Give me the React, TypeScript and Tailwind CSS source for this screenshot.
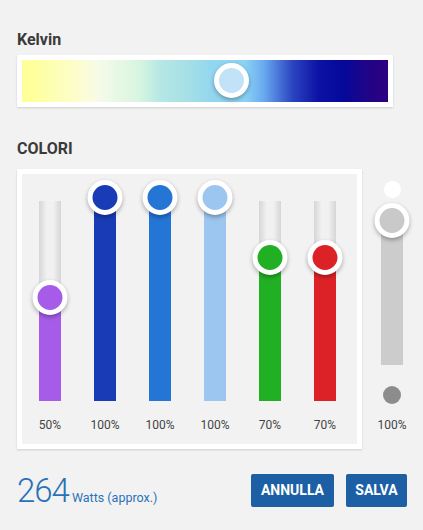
import React from 'react';

type Channel = { pct: number; fill: string; label: string };

const channels: Channel[] = [
  { pct: 50, fill: 'bg-[#a65ce9]', label: '50%' },
  { pct: 100, fill: 'bg-[#193bb5]', label: '100%' },
  { pct: 100, fill: 'bg-[#2475d4]', label: '100%' },
  { pct: 100, fill: 'bg-[#9cc6ef]', label: '100%' },
  { pct: 70, fill: 'bg-[#21b023]', label: '70%' },
  { pct: 70, fill: 'bg-[#dc2227]', label: '70%' },
];

const Knob = ({ color, style }: { color: string; style?: React.CSSProperties }) => (
  <div
    className={`absolute left-1/2 -translate-x-1/2 w-[35px] h-[35px] rounded-full border-[5px] border-white shadow-[0_2px_4px_rgba(0,0,0,0.3)] ${color}`}
    style={style}
  />
);

const VSlider = ({ ch }: { ch: Channel }) => (
  <div className="w-[22px] flex flex-col items-center">
    <div className="relative mt-[27px] w-[22px] h-[200px] bg-[linear-gradient(to_right,#d6d6d6,#f1f1f1_35%,#f1f1f1_65%,#d6d6d6)]">
      <div className={`absolute bottom-0 left-0 w-full ${ch.fill}`} style={{ height: ch.pct * 2 }} />
      <Knob color={ch.fill} style={{ bottom: ch.pct * 2 + 4 - 17.5 }} />
    </div>
    <span className="mt-[18px] text-[12px] leading-none text-[#444] whitespace-nowrap">{ch.label}</span>
  </div>
);

export default function App() {
  return (
    <div className="w-[423px] h-[530px] overflow-hidden bg-[#f2f2f2] pl-[17px] font-['Roboto',sans-serif]">
      {/* Kelvin */}
      <h2 className="pt-[32px] text-[16px] leading-none font-bold text-[#3a3a3a]">Kelvin</h2>
      <div className="mt-[7px] w-[376px] h-[52px] p-[5px] bg-white shadow-[0_1px_2px_rgba(0,0,0,0.15)]">
        <div className="relative h-[42px] w-full bg-[linear-gradient(to_right,#ffff99_0%,#ffff9c_3%,#fbfdd5_17%,#f5fbe8_21%,#d7f5e1_32%,#b5e7e4_38%,#a6e0e6_45%,#92d6ef_52%,#8ad2f5_61%,#6aaaf0_66%,#4a76d8_70%,#2a44c0_74%,#0c12a5_81%,#05089a_88%,#200488_94%,#2e0080_100%)]">
          <div className="absolute left-[192px] top-[3px] w-[35px] h-[35px] rounded-full border-[5px] border-white bg-[#c2e2f8] shadow-[0_2px_4px_rgba(0,0,0,0.3)]" />
        </div>
      </div>

      {/* Colori */}
      <h2 className="mt-[34px] text-[16px] leading-none font-bold text-[#3a3a3a]">COLORI</h2>
      <div className="mt-[12px] flex">
        <div className="w-[345px] h-[280px] p-[5px] bg-white shadow-[0_1px_2px_rgba(0,0,0,0.15)]">
          <div className="h-full bg-[#f2f2f2] flex pl-[17px] gap-[33px]">
            {channels.map((ch, i) => (
              <VSlider key={i} ch={ch} />
            ))}
          </div>
        </div>

        {/* Master */}
        <div className="ml-[19px] w-[22px] flex flex-col items-center">
          <div className="mt-[12px] w-[17px] h-[17px] rounded-full bg-white" />
          <div className="relative mt-[22px] w-[22px] h-[145px] bg-[#cccccc]">
            <Knob color="bg-[#c9c9c9]" style={{ top: -17 }} />
          </div>
          <div className="mt-[21px] w-[18px] h-[18px] rounded-full bg-[#8c8c8c]" />
          <span className="mt-[15px] text-[12px] leading-none text-[#444] whitespace-nowrap">100%</span>
        </div>
      </div>

      {/* Footer */}
      <div className="mt-[25px] pr-[16px] flex items-center justify-between">
        <div className="flex items-baseline gap-[3px] text-[#2a72b8]">
          <span className="text-[33px] leading-none font-light tracking-[-1px]">264</span>
          <span className="text-[12.5px] leading-none">Watts (approx.)</span>
        </div>
        <div className="flex gap-[12px]">
          <button className="w-[83px] h-[33px] rounded-[2px] bg-[#1c5fa5] text-white text-[14px] font-bold">ANNULLA</button>
          <button className="w-[61px] h-[33px] rounded-[2px] bg-[#1c5fa5] text-white text-[14px] font-bold">SALVA</button>
        </div>
      </div>
    </div>
  );
}
